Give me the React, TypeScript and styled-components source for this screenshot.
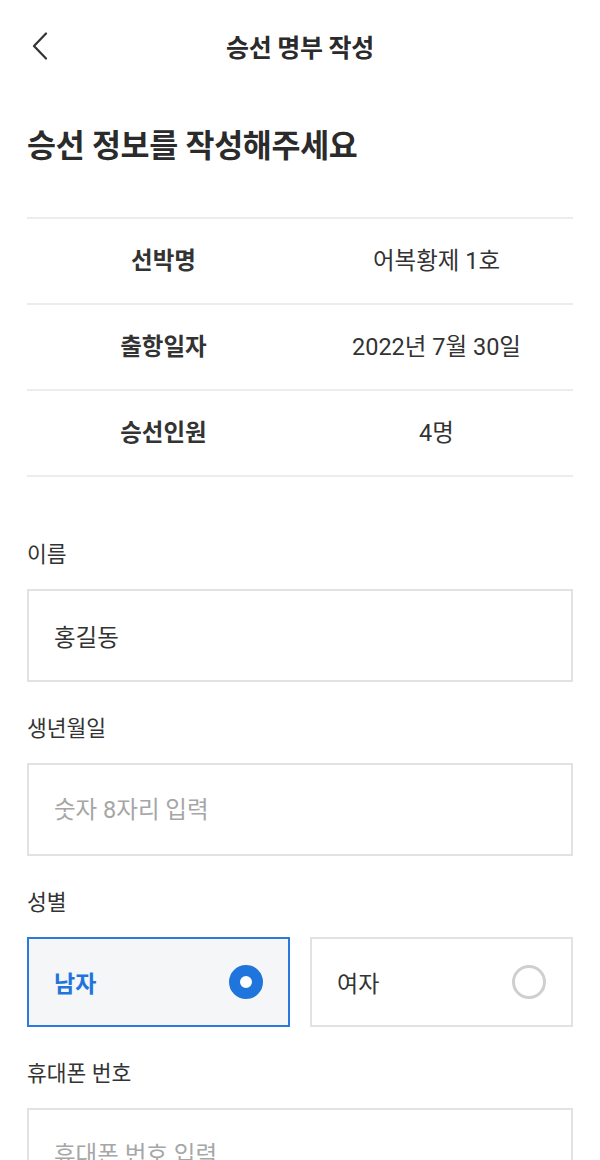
import React, { useState } from "react";
import styled, { createGlobalStyle } from "styled-components";

const GlobalStyle = createGlobalStyle`
  html, body { margin: 0; padding: 0; background: #ffffff; }
  body {
    font-family: Roboto, "Noto Sans CJK KR", "Noto Sans", sans-serif;
    color: #333333;
    -webkit-font-smoothing: antialiased;
  }
  * { box-sizing: border-box; }
`;

const Page = styled.div`
  width: 600px;
  min-height: 1160px;
  background: #ffffff;
  overflow: hidden;
`;

const Header = styled.header`
  height: 92px;
  display: flex;
  align-items: center;
  justify-content: center;
  position: relative;
`;

const BackButton = styled.button`
  position: absolute;
  left: 22px;
  top: 28px;
  width: 36px;
  height: 36px;
  border: none;
  background: none;
  padding: 0;
  display: flex;
  align-items: center;
  justify-content: center;
  cursor: pointer;
`;

const HeaderTitle = styled.h1`
  margin: 0;
  font-size: 25px;
  font-weight: 700;
  color: #2b2b2b;
  letter-spacing: -0.3px;
`;

const Content = styled.main`
  padding: 0 27px;
`;

const Heading = styled.h2`
  margin: 35px 0 50px;
  font-size: 31.5px;
  line-height: 40px;
  font-weight: 700;
  color: #2b2b2b;
  letter-spacing: -0.3px;
`;

const InfoTable = styled.div`
  border-top: 2px solid #ececec;
`;

const InfoRow = styled.div`
  display: grid;
  grid-template-columns: 1fr 1fr;
  align-items: center;
  height: 86px;
  border-bottom: 2px solid #ececec;
`;

const InfoCell = styled.div<{ $bold?: boolean }>`
  text-align: center;
  font-size: 23.5px;
  line-height: 30px;
  font-weight: ${(p) => (p.$bold ? 700 : 400)};
  color: #333333;
`;

const Form = styled.div`
  margin-top: 64px;
  display: flex;
  flex-direction: column;
  gap: 33px;
`;

const Field = styled.div`
  display: flex;
  flex-direction: column;
  gap: 20px;
`;

const Label = styled.label`
  font-size: 21.5px;
  line-height: 28px;
  color: #333333;
`;

const TextInput = styled.input`
  width: 100%;
  height: 93px;
  border: 2px solid #e2e2e2;
  border-radius: 0;
  padding: 0 25px;
  font-family: inherit;
  font-size: 23.5px;
  color: #333333;
  background: #ffffff;
  outline: none;
  &::placeholder {
    color: #a6a6a6;
  }
`;

const OptionGroup = styled.div`
  display: grid;
  grid-template-columns: 1fr 1fr;
  gap: 20px;
`;

const Option = styled.button<{ $selected: boolean }>`
  height: 90px;
  display: flex;
  align-items: center;
  justify-content: space-between;
  padding: 0 25px 0 25px;
  border: 2px solid ${(p) => (p.$selected ? "#2a7ade" : "#e2e2e2")};
  background: ${(p) => (p.$selected ? "#f5f6f8" : "#ffffff")};
  font-family: inherit;
  font-size: 23px;
  font-weight: ${(p) => (p.$selected ? 700 : 400)};
  color: ${(p) => (p.$selected ? "#1f75dc" : "#333333")};
  cursor: pointer;
  text-align: left;
`;

const RadioMark = styled.span<{ $selected: boolean }>`
  width: 34px;
  height: 34px;
  border-radius: 50%;
  flex: none;
  border: ${(p) => (p.$selected ? "11px solid #1f75dc" : "3px solid #cfcfcf")};
  background: #ffffff;
`;

const infoRows = [
  ["선박명", "어복황제 1호"],
  ["출항일자", "2022년 7월 30일"],
  ["승선인원", "4명"],
];

export default function App() {
  const [gender, setGender] = useState<"male" | "female">("male");
  return (
    <Page>
      <GlobalStyle />
      <Header>
        <BackButton aria-label="뒤로">
          <svg width="22" height="28" viewBox="0 0 22 28" fill="none">
            <path d="M17 1.5L5 14l12 12.5" stroke="#333" strokeWidth="2.2" strokeLinecap="round" strokeLinejoin="round" />
          </svg>
        </BackButton>
        <HeaderTitle>승선 명부 작성</HeaderTitle>
      </Header>
      <Content>
        <Heading>승선 정보를 작성해주세요</Heading>
        <InfoTable>
          {infoRows.map(([k, v]) => (
            <InfoRow key={k}>
              <InfoCell $bold>{k}</InfoCell>
              <InfoCell>{v}</InfoCell>
            </InfoRow>
          ))}
        </InfoTable>
        <Form>
          <Field>
            <Label>이름</Label>
            <TextInput defaultValue="홍길동" />
          </Field>
          <Field>
            <Label>생년월일</Label>
            <TextInput placeholder="숫자 8자리 입력" />
          </Field>
          <Field>
            <Label>성별</Label>
            <OptionGroup>
              <Option $selected={gender === "male"} onClick={() => setGender("male")}>
                남자
                <RadioMark $selected={gender === "male"} />
              </Option>
              <Option $selected={gender === "female"} onClick={() => setGender("female")}>
                여자
                <RadioMark $selected={gender === "female"} />
              </Option>
            </OptionGroup>
          </Field>
          <Field>
            <Label>휴대폰 번호</Label>
            <TextInput placeholder="휴대폰 번호 입력" />
          </Field>
        </Form>
      </Content>
    </Page>
  );
}
